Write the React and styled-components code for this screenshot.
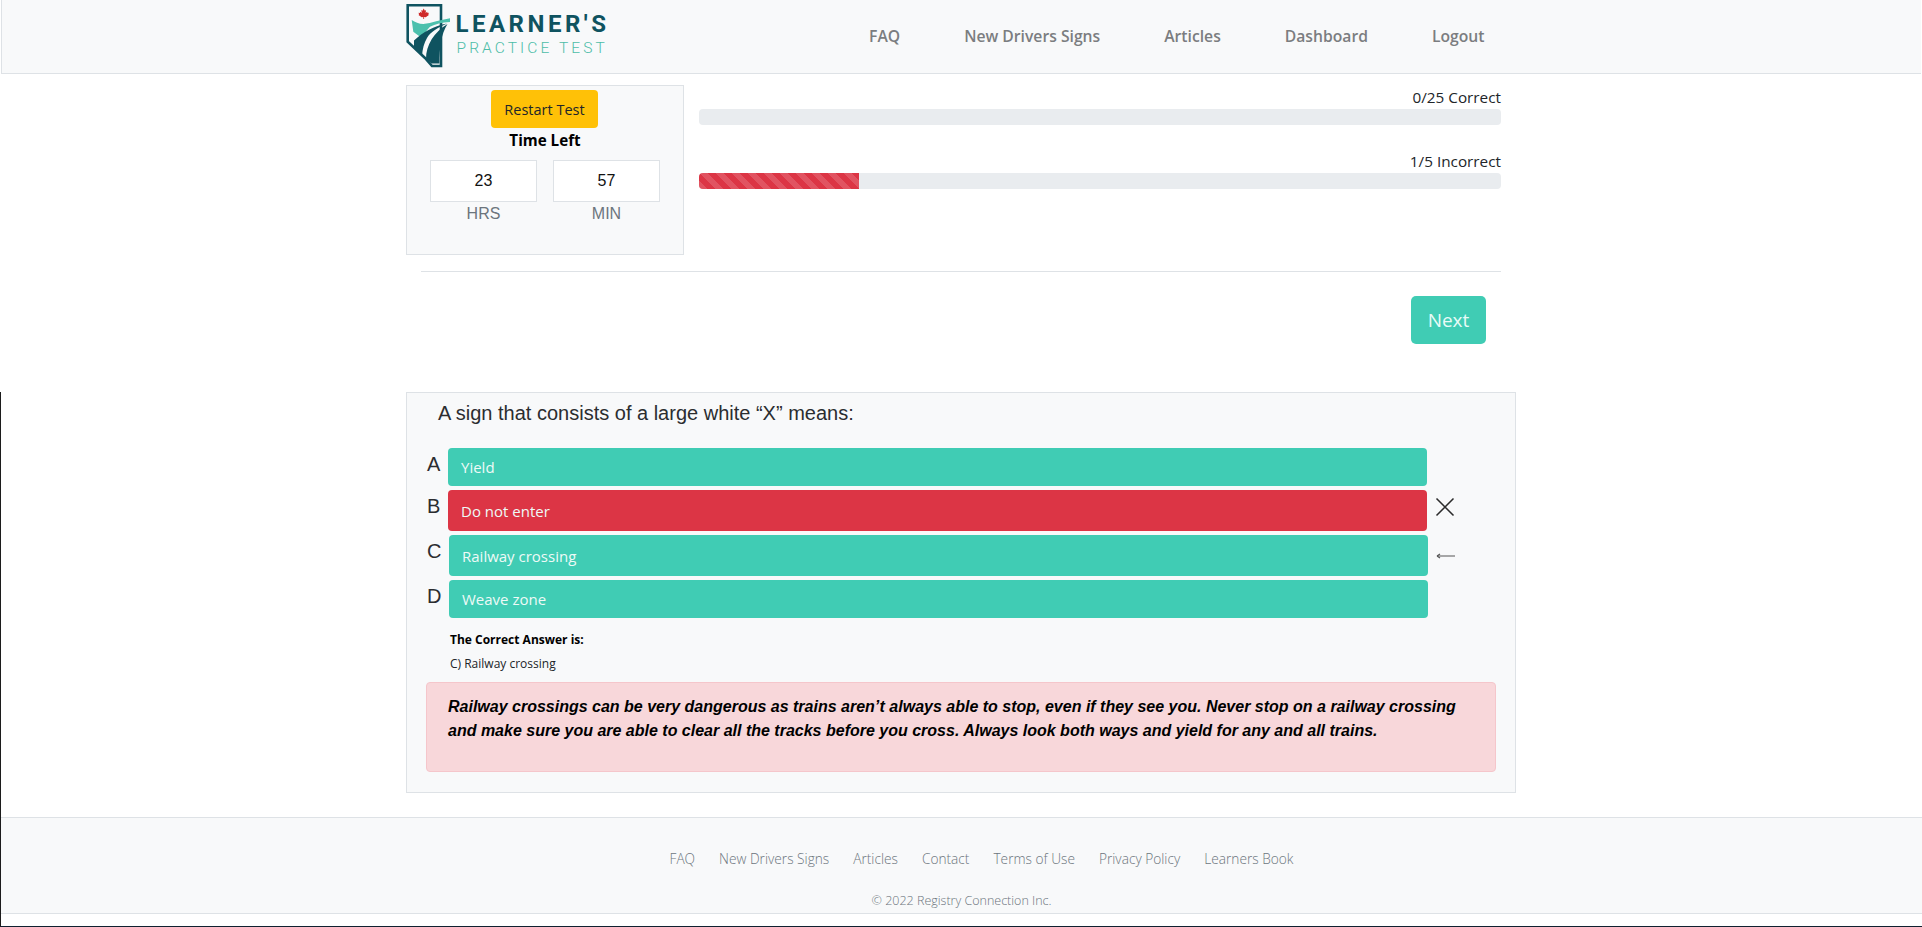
import React from 'react';
import styled, { createGlobalStyle } from 'styled-components';

const GlobalStyle = createGlobalStyle`
  * { box-sizing: border-box; }
  html, body { margin: 0; padding: 0; background: #fff; overflow: hidden; }
  body { font-family: "Open Sans", "Noto Sans", sans-serif; color: #212529; }
`;

const arial = '"Liberation Sans", Arial, sans-serif';
const teal = '#40ccb4';

const Header = styled.header`
  height: 74px;
  margin: 0 1px;
  background: #f8f9fa;
  border: 1px solid #dee2e6;
  border-top: none;
  border-right: none;
`;

const Container = styled.div`
  width: 1110px;
  margin: 0 auto;
`;

const HeaderInner = styled(Container)`
  display: flex;
  align-items: flex-start;
  justify-content: space-between;
  height: 100%;
  padding-right: 32px;
`;

const Logo = styled.a`
  display: flex;
  align-items: flex-start;
  padding-top: 3px;
  margin-left: -3px;
`;

const LogoWords = styled.div`
  margin-left: 6px;
  padding-top: 8px;
`;

const LogoTop = styled.div`
  font-family: Roboto, sans-serif;
  font-weight: 700;
  font-size: 24px;
  line-height: 26px;
  letter-spacing: 3.5px;
  color: #0f5360;
  white-space: nowrap;
`;

const LogoBottom = styled.div`
  font-family: Roboto, sans-serif;
  font-weight: 300;
  font-size: 15.5px;
  line-height: 18px;
  margin: 2px 0 0 1px;
  letter-spacing: 3.1px;
  color: #4dbda8;
  white-space: nowrap;
`;

const Nav = styled.nav`
  display: flex;
  gap: 64px;
  height: 72px;
  align-items: center;
`;

const NavLink = styled.a`
  font-size: 15.7px;
  font-weight: 600;
  color: #7b7d80;
  white-space: nowrap;
`;

const TopRow = styled.div`
  display: grid;
  grid-template-columns: 278px 1fr;
  column-gap: 15px;
  margin-top: 11px;
  padding-right: 15px;
`;

const TimerCard = styled.div`
  height: 170px;
  background: #f8f9fa;
  border: 1px solid #dee2e6;
  display: flex;
  flex-direction: column;
  align-items: center;
  padding-top: 4px;
`;

const RestartButton = styled.button`
  width: 107px;
  height: 38px;
  margin-right: 1px;
  border: none;
  border-radius: 4px;
  background: #ffc107;
  color: #212529;
  font-family: inherit;
  font-size: 14.5px;
  padding: 0;
`;

const TimeLeft = styled.div`
  font-size: 15.2px;
  font-weight: 700;
  color: #000;
  line-height: 24px;
`;

const TimerFields = styled.div`
  display: grid;
  grid-template-columns: 107px 107px;
  column-gap: 16px;
  margin-top: 8px;
`;

const TimerField = styled.div`
  font-family: ${arial};
  text-align: center;
`;

const TimerValue = styled.div`
  height: 42px;
  line-height: 40px;
  background: #fff;
  border: 1px solid #dee2e6;
  font-size: 16px;
  color: #111;
`;

const TimerUnit = styled.div`
  font-size: 16px;
  line-height: 22px;
  margin-top: 1px;
  color: #6c757d;
`;

const Bars = styled.div`
  display: flex;
  flex-direction: column;
`;

const BarLabel = styled.div`
  text-align: right;
  font-size: 15.3px;
  line-height: 24px;
  height: 24px;
  color: #212529;
`;

const BarGroup = styled.div`
  height: 64px;
`;

const Track = styled.div`
  height: 16px;
  border-radius: 4px;
  background: #e9ecef;
  overflow: hidden;
`;

const Fill = styled.div`
  height: 100%;
  background-color: #dc3545;
  background-image: linear-gradient(45deg, rgba(255,255,255,.15) 25%, transparent 25%, transparent 50%, rgba(255,255,255,.15) 50%, rgba(255,255,255,.15) 75%, transparent 75%, transparent);
  background-size: 16px 16px;
`;

const Rule = styled.hr`
  border: none;
  border-top: 1px solid #dee2e6;
  margin: 16px 15px 0 15px;
`;

const NextRow = styled.div`
  display: flex;
  justify-content: flex-end;
  padding-right: 30px;
  margin-top: 24px;
`;

const NextButton = styled.button`
  width: 75px;
  height: 48px;
  border: none;
  border-radius: 5px;
  background: ${teal};
  color: #e8fbf7;
  font-family: inherit;
  font-size: 19px;
  padding: 0;
`;

const Lower = styled.div`
  margin-top: 48px;
  height: 535px;
  box-shadow: inset 1px 0 0 #1c1c1c, inset 0 -1px 0 #102030;
  overflow: hidden;
`;

const Panel = styled(Container)`
  height: 401px;
  background: #f8f9fa;
  border: 1px solid #dee2e6;
  padding: 0 19px 0 19px;
`;

const Question = styled.div`
  font-family: ${arial};
  font-size: 20px;
  line-height: 30px;
  color: #2b2d30;
  padding-left: 12px;
  margin-top: 5px;
  height: 50px;
`;

const Options = styled.div`
  display: flex;
  flex-direction: column;
  gap: 4px;
`;

const OptionRow = styled.div`
  display: grid;
  grid-template-columns: 22px 979px 38px;
  margin-left: ${(p) => (p.$shift ? '1px' : '0')};
  height: ${(p) => p.$height}px;
`;

const OptionLetter = styled.div`
  font-family: ${arial};
  font-size: 20px;
  line-height: 32px;
  color: #2b2d30;
  margin-left: ${(p) => (p.$shift ? '0' : '1px')};
`;

const OptionBar = styled.div`
  display: flex;
  align-items: center;
  padding-left: 13px;
  border-radius: 4px;
  background: ${(p) => (p.$wrong ? '#dc3545' : teal)};
  color: #eefaf7;
  font-size: 15px;
`;

const OptionMark = styled.div`
  display: flex;
  align-items: center;
  padding-left: 8px;
  padding-bottom: ${(p) => (p.$raised ? '7px' : '0')};
`;

const AnswerTitle = styled.div`
  font-size: 12px;
  font-weight: 700;
  color: #000;
  line-height: 18px;
  margin: 13px 0 0 24px;
`;

const AnswerText = styled.div`
  font-size: 12px;
  color: #212529;
  line-height: 18px;
  margin: 6px 0 0 24px;
`;

const Alert = styled.div`
  margin-top: 9px;
  height: 90px;
  background: #f8d7da;
  border: 1px solid #f5c6cb;
  border-radius: 4px;
  padding: 12px 21px;
  font-family: ${arial};
  font-size: 16px;
  font-weight: 700;
  font-style: italic;
  line-height: 24px;
  color: #000;
`;

const Footer = styled.footer`
  height: 97px;
  margin: 24px 0 0 1px;
  background: #f8f9fa;
  border-top: 1px solid #dee2e6;
  border-bottom: 1px solid #dee2e6;
  text-align: center;
  font-weight: 300;
  color: #6c757d;
`;

const FooterLinks = styled.div`
  display: flex;
  justify-content: center;
  gap: 24px;
  padding: 31px 0 0 40px;
  font-size: 13.7px;
  line-height: 20px;
`;

const Copyright = styled.div`
  font-size: 12.5px;
  line-height: 18px;
  margin-top: 23px;
`;

const CrossIcon = () => (
  <svg width="20" height="20" viewBox="0 0 20 20" fill="none" stroke="#2b2b2b" strokeWidth="1.5">
    <path d="M1.5 1.5 L18.5 18.5 M18.5 1.5 L1.5 18.5" />
  </svg>
);

const ArrowIcon = () => (
  <svg width="20" height="10" viewBox="0 0 20 10" fill="none" stroke="#555" strokeWidth="1">
    <path d="M1 5 H19" />
    <path d="M1 5 L4 3 M1 5 L4 7" strokeWidth="1.2" />
  </svg>
);

const LogoMark = () => (
  <svg width="46" height="66" viewBox="0 0 46 66">
    <path d="M3.7 2.3 H37 V63 H28 L21 55 L3.7 38.7 Z" fill="#f8f9fa" stroke="#0f5360" strokeWidth="2.6" />
    <path d="M7.7 17 C11 19 15 21 19.3 21 C28 20 36 17 46 15.3 V19 C38 19.5 31 21 26 23.7 C23 27 20 31 17.7 35 L9.3 28.7 Z" fill="#4cc0ad" />
    <path d="M10 37.5 C19 29 30 23 43 20.5 C33 25 26.5 29 23 35 C20 40 18.5 46 18 53 L10 44 Z" fill="#0f5360" />
    <path d="M22 56 C22 42 30 29 43.5 21 C37 31 35.5 45 35.5 60.5 H27.5 Z" fill="#0f5360" />
    <path transform="translate(19.7 10.5)" d="M0 -5 L1.2 -2.8 L2.4 -3.4 L1.9 -0.6 L3.4 -1.8 L3.9 -0.6 L5.2 -0.8 L4.6 1 L5.2 1.6 L2 3.8 L0.4 3.4 L0.4 5.6 L-0.4 5.6 L-0.4 3.4 L-2 3.8 L-5.2 1.6 L-4.6 1 L-5.2 -0.8 L-3.9 -0.6 L-3.4 -1.8 L-1.9 -0.6 L-2.4 -3.4 L-1.2 -2.8 Z" fill="#cf2a2a" />
  </svg>
);

const navItems = ['FAQ', 'New Drivers Signs', 'Articles', 'Dashboard', 'Logout'];
const footerItems = ['FAQ', 'New Drivers Signs', 'Articles', 'Contact', 'Terms of Use', 'Privacy Policy', 'Learners Book'];

const options = [
  { letter: 'A', text: 'Yield', height: 38 },
  { letter: 'B', text: 'Do not enter', height: 41, wrong: true, mark: <CrossIcon />, raised: true },
  { letter: 'C', text: 'Railway crossing', height: 41, shift: true, mark: <ArrowIcon /> },
  { letter: 'D', text: 'Weave zone', height: 38, shift: true },
];

const App = () => {
  return (
    <>
      <GlobalStyle />
      <Header>
        <HeaderInner>
          <Logo>
            <LogoMark />
            <LogoWords>
              <LogoTop>LEARNER'S</LogoTop>
              <LogoBottom>PRACTICE TEST</LogoBottom>
            </LogoWords>
          </Logo>
          <Nav>
            {navItems.map((item) => (
              <NavLink key={item}>{item}</NavLink>
            ))}
          </Nav>
        </HeaderInner>
      </Header>

      <Container>
        <TopRow>
          <TimerCard>
            <RestartButton>Restart Test</RestartButton>
            <TimeLeft>Time Left</TimeLeft>
            <TimerFields>
              <TimerField>
                <TimerValue>23</TimerValue>
                <TimerUnit>HRS</TimerUnit>
              </TimerField>
              <TimerField>
                <TimerValue>57</TimerValue>
                <TimerUnit>MIN</TimerUnit>
              </TimerField>
            </TimerFields>
          </TimerCard>
          <Bars>
            <BarGroup>
              <BarLabel>0/25 Correct</BarLabel>
              <Track />
            </BarGroup>
            <BarGroup>
              <BarLabel>1/5 Incorrect</BarLabel>
              <Track>
                <Fill style={{ width: `${(1 / 5) * 100}%` }} />
              </Track>
            </BarGroup>
          </Bars>
        </TopRow>
        <Rule />
        <NextRow>
          <NextButton>Next</NextButton>
        </NextRow>
      </Container>

      <Lower>
        <Panel>
          <Question>A sign that consists of a large white “X” means:</Question>
          <Options>
            {options.map((o) => (
              <OptionRow key={o.letter} $shift={o.shift} $height={o.height}>
                <OptionLetter $shift={o.shift}>{o.letter}</OptionLetter>
                <OptionBar $wrong={o.wrong}>{o.text}</OptionBar>
                <OptionMark $raised={o.raised}>{o.mark}</OptionMark>
              </OptionRow>
            ))}
          </Options>
          <AnswerTitle>The Correct Answer is:</AnswerTitle>
          <AnswerText>C) Railway crossing</AnswerText>
          <Alert>
            Railway crossings can be very dangerous as trains aren’t always able to stop, even if they see you. Never stop on a railway crossing and make sure you are able to clear all the tracks before you cross. Always look both ways and yield for any and all trains.
          </Alert>
        </Panel>
        <Footer>
          <FooterLinks>
            {footerItems.map((item) => (
              <span key={item}>{item}</span>
            ))}
          </FooterLinks>
          <Copyright>© 2022 Registry Connection Inc.</Copyright>
        </Footer>
      </Lower>
    </>
  );
};

export default App;
